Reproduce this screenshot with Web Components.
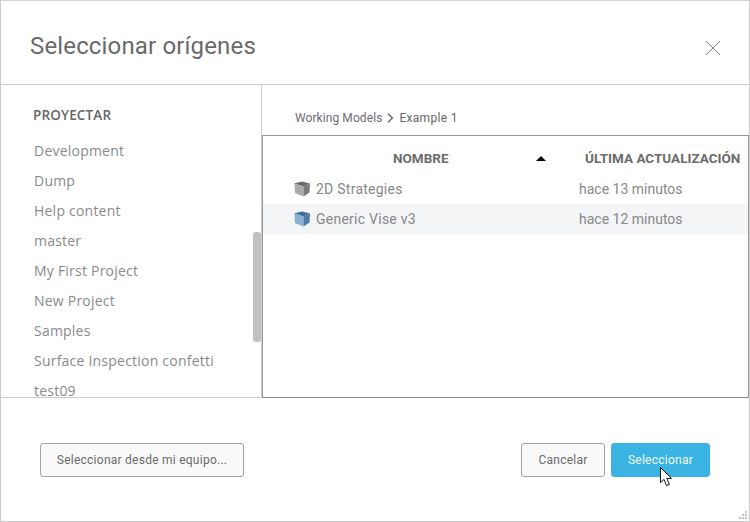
<!DOCTYPE html>
<html lang="es">
<head>
<meta charset="utf-8">
<title>Seleccionar orígenes</title>
<style>
  html, body { margin: 0; padding: 0; background: #fff; }
  body { width: 750px; height: 522px; overflow: hidden; font-family: Roboto, "Liberation Sans", sans-serif; }
</style>
</head>
<body>
<source-dialog heading="Seleccionar orígenes">
  <project-list slot="side" title-text="PROYECTAR">
    <project-item>Development</project-item>
    <project-item>Dump</project-item>
    <project-item>Help content</project-item>
    <project-item>master</project-item>
    <project-item>My First Project</project-item>
    <project-item>New Project</project-item>
    <project-item>Samples</project-item>
    <project-item>Surface Inspection confetti</project-item>
    <project-item>test09</project-item>
  </project-list>
  <file-browser slot="main">
    <file-row name="2D Strategies" updated="hace 13 minutos" tint="grey"></file-row>
    <file-row name="Generic Vise v3" updated="hace 12 minutos" tint="blue" selected></file-row>
  </file-browser>
  <dialog-button slot="footer-left" style="width:204px">Seleccionar desde mi equipo...</dialog-button>
  <dialog-button slot="footer-right" style="width:84px">Cancelar</dialog-button>
  <dialog-button slot="footer-right" primary style="width:99px">Seleccionar</dialog-button>
</source-dialog>

<script>
class SourceDialog extends HTMLElement {
  constructor() {
    super();
    this.attachShadow({ mode: "open" });
  }

  connectedCallback() {
    this.shadowRoot.innerHTML = `
      <style>
        :host {
          display: flex;
          flex-direction: column;
          position: relative;
          box-sizing: border-box;
          width: 750px;
          height: 522px;
          border: 1px solid #ccc;
          border-top-color: #d4d4d4;
          background: #fff;
        }
        header {
          display: flex;
          align-items: center;
          justify-content: space-between;
          box-sizing: border-box;
          height: 84px;
          padding: 6px 28px 0 29px;
          border-bottom: 1px solid #ccc;
        }
        h1 {
          margin: 0;
          font: 400 24px Roboto, sans-serif;
          letter-spacing: .15px;
          color: #6a6a6a;
        }
        .body {
          display: flex;
          height: 313px;
          box-sizing: border-box;
          border-bottom: 1px solid #ccc;
        }
        footer {
          flex: 1;
          display: flex;
          align-items: center;
          justify-content: space-between;
          padding: 1px 39px 0 39px;
        }
        .right { display: flex; gap: 6px; }
        .close { display: block; margin-top: 4px; }
        .grip {
          position: absolute;
          right: 1px;
          bottom: 1px;
        }
      </style>
      <header>
        <h1>${this.getAttribute("heading")}</h1>
        <svg class="close" width="16" height="16" viewBox="0 0 16 16">
          <path d="M1 1 15 15M15 1 1 15" stroke="#808080" stroke-width="1" fill="none"/>
        </svg>
      </header>
      <div class="body">
        <slot name="side"></slot>
        <slot name="main"></slot>
      </div>
      <footer>
        <slot name="footer-left"></slot>
        <div class="right"><slot name="footer-right"></slot></div>
      </footer>
      <svg class="grip" width="9" height="9" viewBox="0 0 9 9" fill="#c4c4c4">
        <rect x="6" y="0" width="2" height="2"/>
        <rect x="3" y="3" width="2" height="2"/><rect x="6" y="3" width="2" height="2"/>
        <rect x="0" y="6" width="2" height="2"/><rect x="3" y="6" width="2" height="2"/><rect x="6" y="6" width="2" height="2"/>
      </svg>
    `;
  }
}

class ProjectList extends HTMLElement {
  constructor() {
    super();
    this.attachShadow({ mode: "open" });
  }

  connectedCallback() {
    this.shadowRoot.innerHTML = `
      <style>
        :host {
          display: block;
          position: relative;
          box-sizing: border-box;
          width: 261px;
          height: 312px;
          overflow: hidden;
          border-right: 1px solid #ccc;
        }
        h2 {
          margin: 0;
          padding: 22px 0 0 32px;
          height: 29px;
          font: 600 13.5px/17px "Open Sans", sans-serif;
          letter-spacing: .15px;
          color: #666;
        }
        .items { padding-left: 33px; display: flex; flex-direction: column; }
        .thumb {
          position: absolute;
          left: 252px;
          top: 147px;
          width: 8px;
          height: 110px;
          border-radius: 3px;
          background: #c1c1c1;
        }
      </style>
      <h2>${this.getAttribute("title-text")}</h2>
      <div class="items"><slot></slot></div>
      <div class="thumb"></div>
    `;
  }
}

class ProjectItem extends HTMLElement {
  constructor() {
    super();
    this.attachShadow({ mode: "open" });
  }

  connectedCallback() {
    this.shadowRoot.innerHTML = `
      <style>
        :host {
          display: block;
          height: 30px;
          font: 400 14px/30px "Open Sans", sans-serif;
          letter-spacing: .22px;
          color: #8a8a8a;
          white-space: nowrap;
        }
      </style>
      <slot></slot>
    `;
  }
}

class FileBrowser extends HTMLElement {
  constructor() {
    super();
    this.attachShadow({ mode: "open" });
  }

  connectedCallback() {
    this.shadowRoot.innerHTML = `
      <style>
        :host {
          display: flex;
          flex-direction: column;
          flex: 1;
          min-width: 0;
        }
        .crumbs {
          display: flex;
          align-items: center;
          gap: 5px;
          box-sizing: border-box;
          height: 50px;
          padding: 16px 0 0 33px;
          font: 400 12px Roboto, sans-serif;
          color: #666;
        }
        .crumbs span:first-child { color: #6f6a75; letter-spacing: .08px; }
        .crumbs span:last-child { letter-spacing: .3px; }
        .table {
          flex: 1;
          box-sizing: border-box;
          border: 1px solid #999;
          border-bottom-color: #888;
          margin-bottom: -1px;
        }
        .head {
          display: grid;
          grid-template-columns: 316px 1fr;
          box-sizing: border-box;
          height: 38px;
          padding-top: 6px;
          align-items: center;
          font: 700 13.5px Roboto, sans-serif;
          color: #6b6b6b;
        }
        .name {
          display: flex;
          align-items: center;
          justify-content: space-between;
          padding-left: 130px;
          padding-right: 33px;
        }
        .up {
          width: 0;
          height: 0;
          border: 5px solid transparent;
          border-top: 0;
          border-bottom: 5px solid #000;
        }
        .date { padding-left: 6px; white-space: nowrap; }
      </style>
      <div class="crumbs">
        <span>Working Models</span>
        <svg width="7" height="10" viewBox="0 0 7 10"><path d="M1 .8 5.4 5 1 9.2" fill="none" stroke="#666" stroke-width="1.4"/></svg>
        <span>Example 1</span>
      </div>
      <div class="table">
        <div class="head">
          <div class="name"><span>NOMBRE</span><i class="up"></i></div>
          <div class="date">ÚLTIMA ACTUALIZACIÓN</div>
        </div>
        <slot></slot>
      </div>
    `;
  }
}

class FileRow extends HTMLElement {
  constructor() {
    super();
    this.attachShadow({ mode: "open" });
  }

  connectedCallback() {
    const blue = this.getAttribute("tint") === "blue";
    const top = blue ? "#3f6f99" : "#6b6b6b";
    const left = blue ? "#8ab0d4" : "#ababab";
    const right = blue ? "#4a7aa5" : "#7a7a7a";
    this.shadowRoot.innerHTML = `
      <style>
        :host {
          display: grid;
          grid-template-columns: 316px 1fr;
          height: 30px;
          align-items: center;
          font: 400 14px Roboto, sans-serif;
          color: #888;
        }
        :host([selected]) { background: #f3f5f7; }
        .name { display: flex; align-items: center; gap: 6px; padding-left: 31px; }
        .name span { letter-spacing: .25px; }
        svg { display: block; }
      </style>
      <div class="name">
        <svg width="16" height="16" viewBox="0 0 16 16">
          <path d="M0 2.5 8 .5 16 2.5 9.5 5.5Z" fill="${top}"/>
          <path d="M.5 2.8 9.5 5.5V15.5L1 12Z" fill="${left}"/>
          <path d="M9.5 5.5 16 2.5 15.5 11.5 9.5 15.5Z" fill="${right}"/>
        </svg>
        <span>${this.getAttribute("name")}</span>
      </div>
      <div>${this.getAttribute("updated")}</div>
    `;
  }
}

class DialogButton extends HTMLElement {
  constructor() {
    super();
    this.attachShadow({ mode: "open" });
  }

  connectedCallback() {
    this.shadowRoot.innerHTML = `
      <style>
        :host {
          display: flex;
          align-items: center;
          justify-content: center;
          position: relative;
          box-sizing: border-box;
          height: 34px;
          border: 1px solid #a3a3a3;
          border-radius: 3px;
          background: #f9f9f9;
          font: 400 12px Roboto, sans-serif;
          letter-spacing: .25px;
          color: #6b6b6b;
          white-space: nowrap;
        }
        :host([primary]) {
          border-color: #3ab4e2;
          background: #3ab4e2;
          color: #f4fbfe;
        }
        .cursor { position: absolute; left: 48px; top: 23px; }
      </style>
      <slot></slot>
      ${this.hasAttribute("primary") ? `
        <svg class="cursor" width="13" height="20" viewBox="0 0 13 20">
          <path d="M.5.5V15.6L4 12.4 6.6 18.6 9.4 17.4 6.8 11.4H11.6Z" fill="#fff" stroke="#111" stroke-width="1"/>
        </svg>` : ""}
    `;
  }
}

customElements.define("source-dialog", SourceDialog);
customElements.define("project-list", ProjectList);
customElements.define("project-item", ProjectItem);
customElements.define("file-browser", FileBrowser);
customElements.define("file-row", FileRow);
customElements.define("dialog-button", DialogButton);
</script>
</body>
</html>
